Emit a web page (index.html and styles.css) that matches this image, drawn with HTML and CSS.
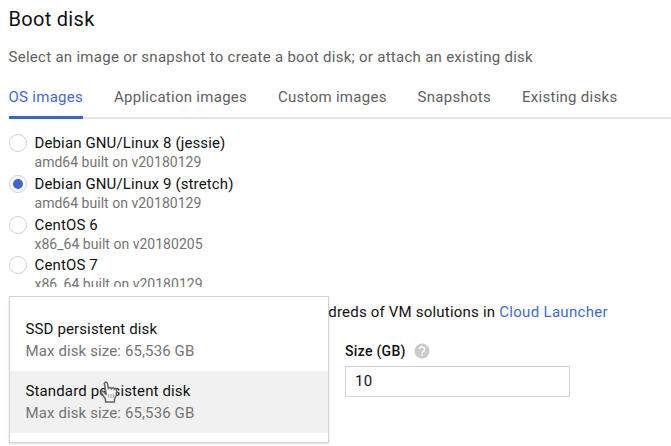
FILE: index.html
```html
<!DOCTYPE html>
<html lang="en">
<head>
<meta charset="utf-8">
<title>Boot disk</title>
<link rel="stylesheet" href="styles.css">
</head>
<body>
<main class="panel">
  <h1 class="title">Boot disk</h1>
  <p class="intro">Select an image or snapshot to create a boot disk; or attach an existing disk</p>
  <nav class="tabs">
    <a class="tab tab-active">OS images</a>
    <a class="tab">Application images</a>
    <a class="tab">Custom images</a>
    <a class="tab">Snapshots</a>
    <a class="tab">Existing disks</a>
  </nav>
  <section class="images">
    <div class="image"><span class="radio"></span><div><div class="name">Debian GNU/Linux 8 (jessie)</div><div class="build">amd64 built on v20180129</div></div></div>
    <div class="image"><span class="radio checked"></span><div><div class="name">Debian GNU/Linux 9 (stretch)</div><div class="build">amd64 built on v20180129</div></div></div>
    <div class="image"><span class="radio"></span><div><div class="name">CentOS 6</div><div class="build">x86_64 built on v20180205</div></div></div>
    <div class="image"><span class="radio"></span><div><div class="name">CentOS 7</div><div class="build">x86_64 built on v20180129</div></div></div>
  </section>
  <p class="more"><span>hundreds of VM solutions in <a class="link">Cloud Launcher</a></span></p>
  <section class="fields">
    <div class="type">
      <div class="menu">
        <div class="option"><div class="option-name">SSD persistent disk</div><div class="option-size">Max disk size: 65,536 GB</div></div>
        <div class="option hover"><div class="option-name">Standard persistent disk</div><div class="option-size">Max disk size: 65,536 GB</div></div>
      </div>
    </div>
    <div class="size">
      <div class="label"><span>Size (GB)</span>
        <svg class="help" viewBox="0 0 16 16"><circle cx="8" cy="8" r="7.6" fill="#cbcbcb"/><path d="M5.5 6.3a2.5 2.5 0 1 1 4 2C8.500 9 8 9.200 8 10.200" fill="none" stroke="#fff" stroke-width="1.5"/><circle cx="8" cy="12.100" r=".95" fill="#fff"/></svg>
      </div>
      <div class="input">10</div>
    </div>
  </section>
  <svg class="cursor" viewBox="0 0 18 22"><path d="M6.200 13.500 3.200 10.500C1.500 9 .3 10.800 1.500 12.200L5.500 18v3h9v-3c1.600-2 2-3.800 2-6V8.800c0-1.700-2-1.900-2.300-.5 0-1.900-2.500-2.100-2.800-.4 0-1.900-2.600-2-2.900-.3L7.300 2.300C6.700.4 4 .9 4.400 3z" fill="#f6f6f6" stroke="#666" stroke-width="1.500" stroke-linejoin="round"/><path d="M8.700 13v4M11 13v4M13.300 13v4" stroke="#999" stroke-width=".9"/></svg>
</main>
</body>
</html>
```
FILE: styles.css
```css
* { box-sizing: border-box; }
body { margin: 0; background: #fff; font: 15px/20px Roboto, sans-serif; color: #111; overflow: hidden; }
.panel { position: relative; width: 671px; height: 446px; padding: 7px 0 0 8.500px; overflow: hidden; white-space: nowrap; }
h1, p { margin: 0; }
.title { font-size: 20px; font-weight: 400; line-height: 24px; letter-spacing: .3px; }
.intro { margin-top: 16px; color: #606060; letter-spacing: .28px; }
.tabs { display: flex; gap: 30.900px; height: 41px; margin-top: 11px; border-bottom: 2px solid #e4e4e4; }
.tab { height: 41px; padding-top: 9px; color: #606060; letter-spacing: .28px; }
.tab-active { color: #4169d2; border-bottom: 3px solid #3c62cb; }
.images { height: 168px; padding-top: 14px; overflow: hidden; }
.image { display: flex; height: 40.800px; gap: 8px; }
.radio { display: flex; width: 18px; height: 18px; margin-top: 1px; border: 1px solid #d2d2d2; border-radius: 50%; }
.checked::after { content: ""; width: 10px; height: 10px; margin: auto; border-radius: 50%; background: #3d65d2; }
.name { line-height: 20px; letter-spacing: .13px; }
.build { color: #747474; font-size: 14px; line-height: 19px; letter-spacing: .02px; }
.more { width: 599.500px; margin-top: 15px; text-align: right; letter-spacing: .2px; }
.link { color: #3f6bd2; letter-spacing: .32px; }
.fields { display: flex; margin-top: 19px; }
.type { position: relative; width: 336.500px; }
.menu { position: absolute; top: -45px; left: .5px; width: 320px; height: 147px; padding-top: 12px; background: #fff; border: 1px solid #d2d2d2; box-shadow: 0 1px 2px #0002; }
.option { height: 62px; padding: 10px 15.500px; }
.hover { background: #f1f1f1; }
.option-name { line-height: 20px; letter-spacing: .13px; }
.option-size { line-height: 24px; color: #747474; letter-spacing: .12px; }
.label { display: flex; gap: 8px; align-items: center; height: 20px; font-size: 14px; font-weight: 500; letter-spacing: .3px; }
.help { width: 16px; height: 16px; }
.input { width: 225px; height: 31px; margin-top: 5px; padding: 4px 9px; border: 1px solid #d2d2d2; letter-spacing: .2px; }
.cursor { position: absolute; left: 99px; top: 381px; width: 20px; height: 22px; }
```
